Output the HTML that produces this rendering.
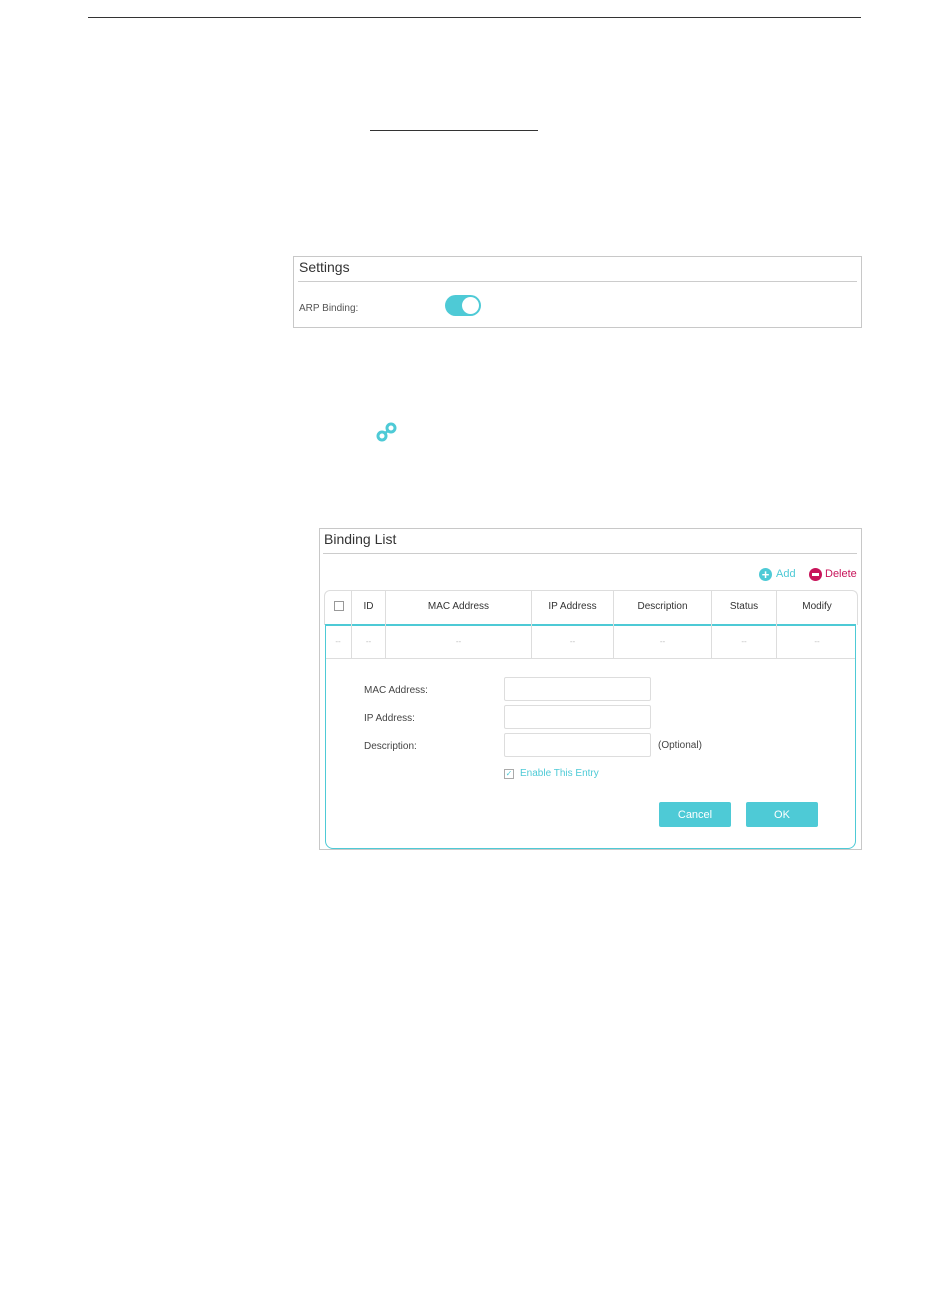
<!DOCTYPE html>
<html><head><style>
body{margin:0;width:950px;height:1297px;background:#fff;position:relative;font-family:"Liberation Sans",sans-serif;overflow:hidden}
.a{position:absolute}
.t{position:absolute;font-size:10px;color:#444;white-space:nowrap}
.h{position:absolute;font-size:10px;color:#333;text-align:center;top:601px}
.d{position:absolute;font-size:8px;color:#bbb;text-align:center;top:637px}
.in{position:absolute;left:504px;width:145px;height:22px;border:1px solid #ddd;border-radius:2px;background:#fff}
.btn{position:absolute;top:802px;height:25px;width:72px;background:#4ecad6;color:#fff;font-size:11px;text-align:center;line-height:27px;border-radius:2px}
</style></head><body>
<div class="a" style="left:88px;top:17px;width:773px;height:1px;background:#333"></div>
<div class="a" style="left:370px;top:130px;width:168px;height:1px;background:#333"></div>

<div class="a" style="left:293px;top:256px;width:567px;height:70px;border:1px solid #c8c8c8"></div>
<div class="t" style="left:299px;top:259px;font-size:14px;color:#333">Settings</div>
<div class="a" style="left:298px;top:281px;width:559px;height:1px;background:#ccc"></div>
<div class="t" style="left:299px;top:303px;font-size:10px;color:#555">ARP Binding:</div>
<div class="a" style="left:445px;top:295px;width:36px;height:21px;border-radius:11px;background:#4ecad6"></div>
<div class="a" style="left:462px;top:297px;width:17px;height:17px;border-radius:50%;background:#fff"></div>

<svg class="a" style="left:375px;top:421px" width="24" height="22" viewBox="0 0 24 22"><circle cx="7" cy="15" r="4" fill="none" stroke="#4ecad6" stroke-width="3"/><circle cx="16" cy="7" r="4" fill="none" stroke="#4ecad6" stroke-width="3"/><line x1="9" y1="13" x2="14" y2="9" stroke="#4ecad6" stroke-width="2.5"/></svg>

<div class="a" style="left:319px;top:528px;width:541px;height:320px;border:1px solid #c8c8c8"></div>
<div class="t" style="left:324px;top:531px;font-size:14px;color:#333">Binding List</div>
<div class="a" style="left:323px;top:553px;width:534px;height:1px;background:#ccc"></div>
<div class="a" style="left:759px;top:568px;width:13px;height:13px;border-radius:50%;background:#4ecad6;color:#fff;font-size:13px;line-height:13px;text-align:center;font-weight:bold">+</div>
<div class="t" style="left:776px;top:568px;font-size:11px;color:#4ecad6">Add</div>
<div class="a" style="left:809px;top:568px;width:13px;height:13px;border-radius:50%;background:#c8145a"><div class="a" style="left:3px;top:5px;width:7px;height:3px;background:#fff"></div></div>
<div class="t" style="left:825px;top:568px;font-size:11px;color:#c8145a">Delete</div>

<div class="a" style="left:324px;top:590px;width:532px;height:34px;border:1px solid #ddd;border-bottom:none;border-radius:6px 6px 0 0"></div>
<div class="a" style="left:325px;top:624px;width:529px;height:222px;border:1px solid #4ecad6;border-top:2px solid #4ecad6;border-radius:0 0 8px 8px"></div>
<div class="a" style="left:326px;top:658px;width:529px;height:1px;background:#ddd"></div>
<div class="a" style="left:351px;top:590px;width:1px;height:68px;background:#ddd"></div>
<div class="a" style="left:385px;top:590px;width:1px;height:68px;background:#ddd"></div>
<div class="a" style="left:531px;top:590px;width:1px;height:68px;background:#ddd"></div>
<div class="a" style="left:613px;top:590px;width:1px;height:68px;background:#ddd"></div>
<div class="a" style="left:711px;top:590px;width:1px;height:68px;background:#ddd"></div>
<div class="a" style="left:776px;top:590px;width:1px;height:68px;background:#ddd"></div>
<div class="a" style="left:334px;top:601px;width:8px;height:8px;border:1px solid #999"></div>
<div class="h" style="left:352px;width:33px">ID</div>
<div class="h" style="left:386px;width:145px">MAC Address</div>
<div class="h" style="left:532px;width:81px">IP Address</div>
<div class="h" style="left:614px;width:97px">Description</div>
<div class="h" style="left:712px;width:64px">Status</div>
<div class="h" style="left:777px;width:80px">Modify</div>
<div class="d" style="left:325px;width:26px">--</div>
<div class="d" style="left:352px;width:33px">--</div>
<div class="d" style="left:386px;width:145px">--</div>
<div class="d" style="left:532px;width:81px">--</div>
<div class="d" style="left:614px;width:97px">--</div>
<div class="d" style="left:712px;width:64px">--</div>
<div class="d" style="left:777px;width:80px">--</div>

<div class="t" style="left:364px;top:685px">MAC Address:</div>
<div class="t" style="left:364px;top:713px">IP Address:</div>
<div class="t" style="left:364px;top:741px">Description:</div>
<div class="in" style="top:677px"></div>
<div class="in" style="top:705px"></div>
<div class="in" style="top:733px"></div>
<div class="t" style="left:658px;top:740px">(Optional)</div>
<div class="a" style="left:504px;top:769px;width:8px;height:8px;border:1px solid #aaa;color:#4ecad6;font-size:8px;line-height:8px;text-align:center">✓</div>
<div class="t" style="left:520px;top:768px;color:#4ecad6">Enable This Entry</div>
<div class="btn" style="left:659px">Cancel</div>
<div class="btn" style="left:746px">OK</div>
</body></html>
